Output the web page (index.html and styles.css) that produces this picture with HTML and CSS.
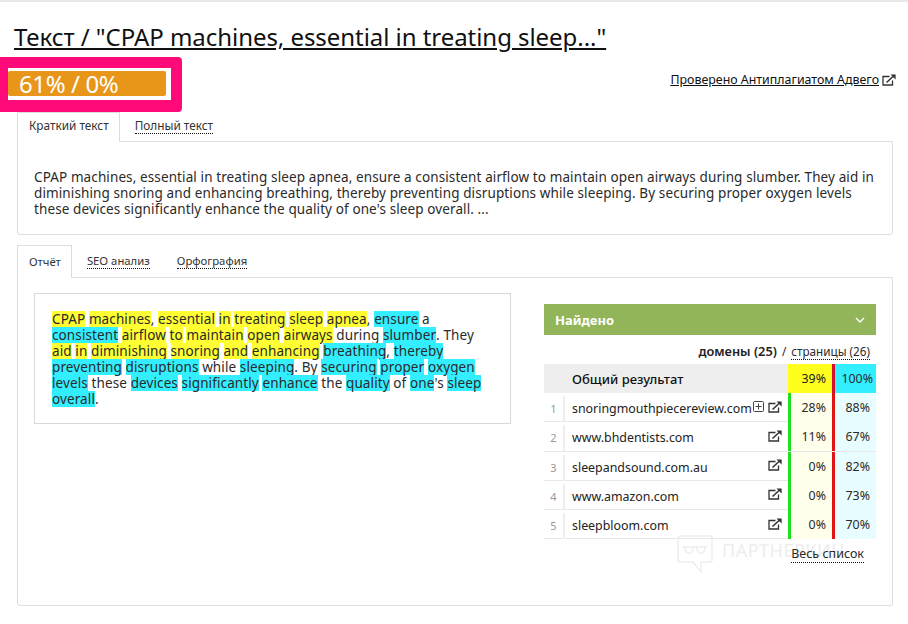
FILE: index.html
```html
<!DOCTYPE html>
<html lang="ru">
<head>
<meta charset="utf-8">
<title>Текст</title>
<link rel="stylesheet" href="styles.css">
</head>
<body>
<div class="page">
  <h1 class="title"><a href="#">Текст / "CPAP machines, essential in treating sleep..."</a></h1>
  <div class="score-row">
    <div class="score-bar">61% / 0%</div>
    <a class="checked" href="#"><span class="u">Проверено Антиплагиатом Адвего</span>
      <svg class="ext ext-big" viewBox="0 0 14 12"><path d="M7.5 2.5H1V11H10.5V6.5" fill="none" stroke="currentColor" stroke-width="1.3"/><path d="M4.5 8.5L11 2.5" fill="none" stroke="currentColor" stroke-width="1.6"/><path d="M8.5 .5H13.6V5.6Z" fill="currentColor"/></svg>
    </a>
  </div>
  <div class="tabs">
    <div class="tab active">Краткий текст</div>
    <div class="tab"><span class="dot">Полный текст</span></div>
  </div>
  <div class="panel summary">CPAP machines, essential in treating sleep apnea, ensure a consistent airflow to maintain open airways during slumber. They aid in<br>diminishing snoring and enhancing breathing, thereby preventing disruptions while sleeping. By securing proper oxygen levels<br>these devices significantly enhance the quality of one's sleep overall. ...</div>
  <div class="tabs tabs-report">
    <div class="tab active">Отчёт</div>
    <div class="tab"><span class="dot">SEO анализ</span></div>
    <div class="tab"><span class="dot">Орфография</span></div>
  </div>
  <div class="panel report">
    <div class="textbox">
      <i class="y">CPAP</i> <i class="y">machines</i>, <i class="y">essential</i> <i class="y">in</i> <i class="y">treating</i> <i class="y">sleep</i> <i class="y">apnea</i>, <i class="c">ensure</i> a<br>
      <i class="c">consistent</i> <i class="y">airflow</i> <i class="y">to</i> <i class="y">maintain</i> <i class="y">open</i> <i class="y">airways</i> during <i class="c">slumber</i>. They<br>
      <i class="y">aid</i> <i class="y">in</i> <i class="y">diminishing</i> <i class="y">snoring</i> <i class="y">and</i> <i class="y">enhancing</i> <i class="c">breathing</i>, <i class="c">thereby</i><br>
      <i class="c">preventing</i> <i class="c">disruptions</i> while <i class="c">sleeping</i>. By <i class="c">securing</i> <i class="c">proper</i> <i class="c">oxygen</i><br>
      <i class="c">levels</i> these <i class="c">devices</i> <i class="c">significantly</i> <i class="c">enhance</i> the <i class="c">quality</i> of <i class="c">one</i>'s <i class="c">sleep</i><br>
      <i class="c">overall</i>.
    </div>
    <div class="found">
      <div class="found-head"><span>Найдено</span>
        <svg class="chev" viewBox="0 0 10 6"><path d="M1 1L5 5 9 1" fill="none" stroke="#fff" stroke-width="1.4"/></svg>
      </div>
      <div class="found-sub"><b>домены (25)</b> <span class="sl">/</span> <span class="dot">страницы (26)</span></div>
      <div class="row row-head">
        <div class="num"></div>
        <div class="name">Общий результат</div>
        <div class="p1">39%</div>
        <div class="p2">100%</div>
      </div>
      <div class="row">
        <div class="num">1</div>
        <div class="name"><span class="dom">snoringmouthpiecereview.com</span>
          <svg class="plus" viewBox="0 0 11 11"><rect x=".5" y=".5" width="10" height="10" rx="1" fill="none" stroke="currentColor"/><path d="M5.5 2.5V8.5M2.5 5.5H8.5" stroke="currentColor"/></svg>
          <svg class="ext" viewBox="0 0 14 12"><path d="M7.5 2.5H1V11H10.5V6.5" fill="none" stroke="currentColor" stroke-width="1.3"/><path d="M4.5 8.5L11 2.5" fill="none" stroke="currentColor" stroke-width="1.6"/><path d="M8.5 .5H13.6V5.6Z" fill="currentColor"/></svg>
        </div>
        <div class="p1">28%</div>
        <div class="p2">88%</div>
      </div>
      <div class="row">
        <div class="num">2</div>
        <div class="name"><span class="dom">www.bhdentists.com</span>
          <svg class="ext" viewBox="0 0 14 12"><path d="M7.5 2.5H1V11H10.5V6.5" fill="none" stroke="currentColor" stroke-width="1.3"/><path d="M4.5 8.5L11 2.5" fill="none" stroke="currentColor" stroke-width="1.6"/><path d="M8.5 .5H13.6V5.6Z" fill="currentColor"/></svg>
        </div>
        <div class="p1">11%</div>
        <div class="p2">67%</div>
      </div>
      <div class="row">
        <div class="num">3</div>
        <div class="name"><span class="dom">sleepandsound.com.au</span>
          <svg class="ext" viewBox="0 0 14 12"><path d="M7.5 2.5H1V11H10.5V6.5" fill="none" stroke="currentColor" stroke-width="1.3"/><path d="M4.5 8.5L11 2.5" fill="none" stroke="currentColor" stroke-width="1.6"/><path d="M8.5 .5H13.6V5.6Z" fill="currentColor"/></svg>
        </div>
        <div class="p1">0%</div>
        <div class="p2">82%</div>
      </div>
      <div class="row">
        <div class="num">4</div>
        <div class="name"><span class="dom">www.amazon.com</span>
          <svg class="ext" viewBox="0 0 14 12"><path d="M7.5 2.5H1V11H10.5V6.5" fill="none" stroke="currentColor" stroke-width="1.3"/><path d="M4.5 8.5L11 2.5" fill="none" stroke="currentColor" stroke-width="1.6"/><path d="M8.5 .5H13.6V5.6Z" fill="currentColor"/></svg>
        </div>
        <div class="p1">0%</div>
        <div class="p2">73%</div>
      </div>
      <div class="row">
        <div class="num">5</div>
        <div class="name"><span class="dom">sleepbloom.com</span>
          <svg class="ext" viewBox="0 0 14 12"><path d="M7.5 2.5H1V11H10.5V6.5" fill="none" stroke="currentColor" stroke-width="1.3"/><path d="M4.5 8.5L11 2.5" fill="none" stroke="currentColor" stroke-width="1.6"/><path d="M8.5 .5H13.6V5.6Z" fill="currentColor"/></svg>
        </div>
        <div class="p1">0%</div>
        <div class="p2">70%</div>
      </div>
      <div class="all"><span class="dot">Весь список</span></div>
    </div>
  </div>
</div>
<div class="annot"></div>
<div class="mark">
  <svg viewBox="0 0 36 38"><path d="M3 1H33a2 2 0 0 1 2 2V25a2 2 0 0 1-2 2H24V37L16 27H3a2 2 0 0 1-2-2V3A2 2 0 0 1 3 1Z" fill="none" stroke="currentColor" stroke-width="1.5"/><path d="M6 12H30M8 12C8 20 16 20 16 13M20 13C20 20 28 20 28 12" fill="none" stroke="currentColor" stroke-width="1.5"/></svg>
  <span>ПАРТНЕРКИН</span>
</div>
</body>
</html>
```

FILE: styles.css
```css
* { box-sizing: border-box; }
html { background: #fff; }
html, body { margin: 0; padding: 0; }
body {
  position: relative;
  height: 624px;
  overflow: hidden;
  font-family: "Noto Sans", sans-serif;
  font-size: 13.5px;
  line-height: 16px;
  color: #2a2a2a;
}
.page {
  border-top: 2px solid #e8e8e8;
  padding: 0 15px 0 17px;
}
a { color: #111; }
.title {
  margin: 20px 0 0 -3px;
  font-size: 24px;
  line-height: 30px;
  font-weight: 400;
  letter-spacing: -0.05px;
}
.score-row {
  display: flex;
  justify-content: space-between;
  align-items: center;
  height: 57px;
  margin-top: 3px;
}
.score-bar {
  width: 158px;
  height: 25px;
  margin-left: -9px;
  padding-left: 11px;
  background: #e8961a;
  border-radius: 2px;
  color: #fff;
  font-size: 24px;
  line-height: 25px;
  letter-spacing: -0.4px;
}
.checked {
  font-size: 12.4px;
  margin: 0 -3px 8px 0;
  white-space: nowrap;
  display: flex;
  align-items: center;
  gap: 3px;
}
.u { text-decoration: underline; }
.ext { width: 14px; height: 12px; color: #333; flex: none; margin-bottom: 4px; }
.ext-big { margin-bottom: 0; }
.tabs { display: flex; height: 30px; position: relative; z-index: 1; font-size: 11.8px; }
.tab {
  padding: 4px 11px 0 14px;
  border: 1px solid transparent;
  border-bottom: 0;
  color: #333;
}
.tab.active {
  background: #fff;
  border-color: #ddd;
  height: 30px;
  padding-left: 11px;
  padding-right: 10px;
}
.dot { border-bottom: 1px dotted #111; }
.panel {
  border: 1px solid #ddd;
  border-radius: 0 0 3px 3px;
  margin-top: -1px;
}
.summary {
  height: 94px;
  padding: 27px 16px 0 16px;
  letter-spacing: 0.11px;
  white-space: nowrap;
}
.tabs-report { margin-top: 10px; height: 33px; font-size: 11.3px; }
.tabs-report .tab { padding-top: 7px; }
.tabs-report .tab.active { height: 33px; padding-top: 8px; }
.report {
  display: flex;
  align-items: flex-start;
  height: 329px;
  padding: 15px 16px 0 16px;
}
.textbox {
  width: 477px;
  height: 131px;
  padding: 17px 17px 0;
  border: 1px solid #d8d8d8;
  white-space: nowrap;
  letter-spacing: 0.11px;
}
.textbox i { font-style: normal; display: inline-block; }
.y { background: #ffff33; }
.c { background: #33eeff; }
.found { width: 332px; margin: 11px 0 0 33px; }
.found-head {
  display: flex;
  justify-content: space-between;
  align-items: center;
  height: 31px;
  padding: 0 11px;
  background: #93b55a;
  color: #fff;
  font-weight: 700;
  font-size: 13px;
}
.chev { width: 10px; height: 6px; }
.found-sub {
  height: 29px;
  padding: 8px 6px 0 0;
  text-align: right;
  font-size: 11.7px;
}
.found-sub b { font-weight: 600; color: #222; font-size: 12.8px; }
.sl { margin: 0 2px; }
.row {
  display: grid;
  grid-template-columns: 21px 223px 44px 44px;
  height: 29.3px;
  border-bottom: 1px solid #e8e8e8;
  font-size: 12.4px;
  line-height: 27px;
}
.num {
  color: #999;
  font-size: 11px;
  text-align: center;
  border-right: 2px solid #eee;
  margin: 3px 0 0;
  line-height: 26px;
}
.name {
  display: flex;
  align-items: center;
  padding: 2px 6px 0 7px;
  color: #222;
}
.dom { flex: 1; white-space: nowrap; }
.plus { width: 11px; height: 11px; color: #444; margin: 0 4px 4px 0; flex: none; }
.p1 {
  background: #ffffec;
  border-left: 3px solid #1fe01f;
  text-align: right;
  padding: 1px 6px 0 0;
}
.p2 {
  background: #e8fdff;
  border-left: 3px solid #e01414;
  text-align: right;
  padding: 1px 6px 0 0;
}
.row-head { height: 29px; background: #eee; border-bottom: 0; }
.row-head .num { border: 0; }
.row-head .name { color: #111; font-weight: 500; font-size: 13px; }
.row-head .p1 { background: #ffff1e; border-left: 0; color: #222; }
.row-head .p2 { background: #33eeff; border-left-color: #d01030; padding-right: 3px; }
.all { text-align: right; padding: 7px 12px 0 0; font-size: 12.5px; }
.annot {
  position: absolute;
  left: -4px;
  top: 57px;
  width: 186px;
  height: 55px;
  border: solid #ff0a78;
  border-width: 11px 11px 12px 12px;
  border-radius: 4px;
  pointer-events: none;
}
.mark {
  position: absolute;
  z-index: -1;
  left: 677px;
  top: 535px;
  display: flex;
  gap: 9px;
  color: #eeeeee;
  font-size: 18px;
  line-height: 30px;
  letter-spacing: 0.5px;
  pointer-events: none;
}
.mark svg { width: 36px; height: 38px; }
```
